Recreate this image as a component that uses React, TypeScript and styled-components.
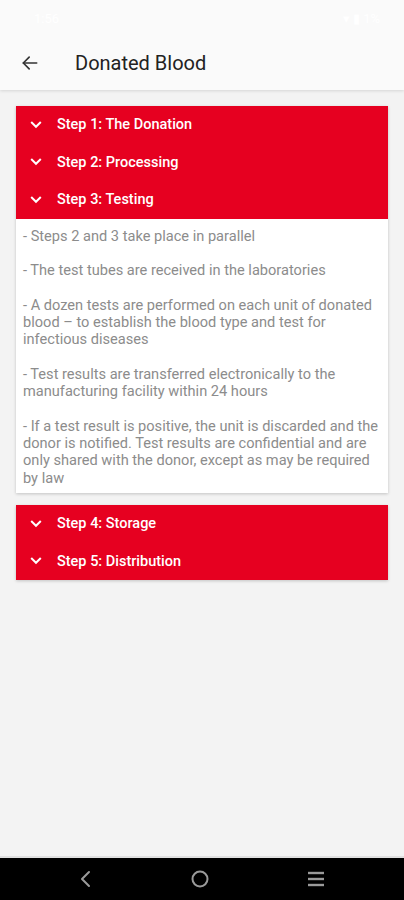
import React from 'react';
import styled, { createGlobalStyle } from 'styled-components';

const GlobalStyle = createGlobalStyle`
  html, body {
    margin: 0;
    padding: 0;
    background: #f3f3f3;
    font-family: Roboto, 'Liberation Sans', sans-serif;
  }
  #root {
    min-height: 900px;
  }
`;

const topSteps = ['Step 1: The Donation', 'Step 2: Processing', 'Step 3: Testing'];
const bottomSteps = ['Step 4: Storage', 'Step 5: Distribution'];

const paragraphs = [
  '- Steps 2 and 3 take place in parallel',
  '- The test tubes are received in the laboratories',
  '- A dozen tests are performed on each unit of donated blood \u2013 to establish the blood type and test for infectious diseases',
  '- Test results are transferred electronically to the manufacturing facility within 24 hours',
  '- If a test result is positive, the unit is discarded and the donor is notified. Test results are confidential and are only shared with the donor, except as may be required by law',
];

function Chevron() {
  return (
    <svg width="14" height="14" viewBox="0 0 24 24" fill="none" stroke="#fff" strokeWidth="3.4" strokeLinecap="square">
      <polyline points="5,8 12,15 19,8" />
    </svg>
  );
}

function App() {
  return (
    <Page>
      <GlobalStyle />
      <Header>
        <StatusBar>
          <span>1:56</span>
          <span>▾ ▮ 1%</span>
        </StatusBar>
        <Toolbar>
          <BackButton>
            <svg width="20" height="20" viewBox="0 0 24 24" fill="none" stroke="#333" strokeWidth="2" strokeLinecap="round" strokeLinejoin="round">
              <line x1="20" y1="12" x2="4" y2="12" />
              <polyline points="11,5 4,12 11,19" />
            </svg>
          </BackButton>
          <Title>Donated Blood</Title>
        </Toolbar>
      </Header>

      <Content>
        <Card>
          <StepList>
            {topSteps.map((s) => (
              <StepRow key={s}>
                <Chevron />
                <StepLabel>{s}</StepLabel>
              </StepRow>
            ))}
          </StepList>
          <Body>
            {paragraphs.map((p) => (
              <Para key={p}>{p}</Para>
            ))}
          </Body>
        </Card>

        <Card>
          <StepList>
            {bottomSteps.map((s) => (
              <StepRow key={s}>
                <Chevron />
                <StepLabel>{s}</StepLabel>
              </StepRow>
            ))}
          </StepList>
        </Card>
      </Content>

      <NavBar>
        <svg width="16" height="18" viewBox="0 0 16 18" fill="none" stroke="#9a9a9a" strokeWidth="2" strokeLinecap="round" strokeLinejoin="round">
          <polyline points="11,2 4,9 11,16" />
        </svg>
        <svg width="20" height="20" viewBox="0 0 20 20" fill="none" stroke="#9a9a9a" strokeWidth="2">
          <circle cx="10" cy="10" r="7.5" />
        </svg>
        <svg width="20" height="18" viewBox="0 0 20 18" fill="none" stroke="#9a9a9a" strokeWidth="2.4">
          <line x1="2" y1="3" x2="18" y2="3" />
          <line x1="2" y1="9" x2="18" y2="9" />
          <line x1="2" y1="15" x2="18" y2="15" />
        </svg>
      </NavBar>
    </Page>
  );
}

export default App;

const Page = styled.div`
  display: flex;
  flex-direction: column;
  width: 404px;
  height: 900px;
  background: #f3f3f3;
`;

const Header = styled.header`
  display: flex;
  flex-direction: column;
  height: 90px;
  background: #fafafa;
  box-shadow: 0 1px 3px rgba(0, 0, 0, 0.12);
  flex-shrink: 0;
`;

const StatusBar = styled.div`
  display: flex;
  justify-content: space-between;
  align-items: center;
  height: 36px;
  padding: 0 24px 0 34px;
  color: #ffffff;
  font-size: 13px;
`;

const Toolbar = styled.div`
  display: flex;
  align-items: center;
  height: 54px;
`;

const BackButton = styled.div`
  display: flex;
  align-items: center;
  justify-content: center;
  width: 60px;
  height: 54px;
`;

const Title = styled.h1`
  margin: 0 0 0 15px;
  font-size: 20px;
  font-weight: 400;
  color: #222222;
`;

const Content = styled.main`
  display: flex;
  flex-direction: column;
  gap: 12px;
  flex: 1;
  padding: 16px 16px 0;
`;

const Card = styled.section`
  display: flex;
  flex-direction: column;
  background: #ffffff;
  box-shadow: 0 1px 3px rgba(0, 0, 0, 0.2);
`;

const StepList = styled.div`
  display: flex;
  flex-direction: column;
  background: #e60020;
`;

const StepRow = styled.div`
  display: flex;
  align-items: center;
  height: 37.5px;
  padding-left: 13px;
`;

const StepLabel = styled.span`
  margin-left: 14px;
  color: #ffffff;
  font-size: 14.5px;
  font-weight: 500;
`;

const Body = styled.div`
  display: flex;
  flex-direction: column;
  gap: 17.3px;
  padding: 9px 8px 6px 7px;
`;

const Para = styled.p`
  margin: 0;
  font-size: 14.6px;
  line-height: 17.3px;
  color: #8c8c8c;
`;

const NavBar = styled.nav`
  display: flex;
  justify-content: space-between;
  align-items: center;
  height: 42px;
  padding: 0 78px;
  background: #000;
  border-top: 2px solid #e0e0e0;
  flex-shrink: 0;
`;
